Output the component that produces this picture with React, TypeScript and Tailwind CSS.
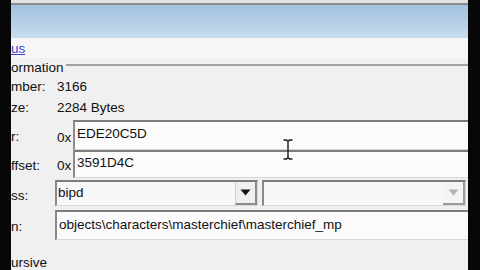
import React from 'react';

// sunken classic edit box
function EditBox({ value, className = '' }: { value: string; className?: string }) {
  return (
    <div
      className={`flex items-center border-t-2 border-l-2 border-b border-r border-t-[#7c7c7c] border-l-[#8a8a8a] border-b-[#d8d8d8] border-r-[#d8d8d8] bg-[#fbfbfb] pl-[2px] ${className}`}
    >
      <span className="whitespace-nowrap">{value}</span>
    </div>
  );
}

function Combo({ value, disabled = false, className = '' }: { value: string; disabled?: boolean; className?: string }) {
  return (
    <div
      className={`flex items-stretch border-t-2 border-l-2 border-b border-r border-t-[#7c7c7c] border-l-[#8a8a8a] border-b-[#d8d8d8] border-r-[#d8d8d8] bg-[#f8f8f8] ${className}`}
    >
      <div className="flex-1 flex items-center pl-[1px] whitespace-nowrap">{value}</div>
      <div
        className={`w-[22px] flex items-center justify-center border-r-2 border-b-2 ${
          disabled ? 'border-r-[#9a9a9a] border-b-[#9a9a9a] bg-[#f4f4f4]' : 'border-r-[#8a8a8a] border-b-[#8a8a8a] bg-[#f0f0f0] border-l border-l-[#d0d0d0]'
        }`}
      >
        <svg width="11" height="7" viewBox="0 0 11 7">
          <path d="M0.5 0.5 L10.5 0.5 L5.5 6.5 Z" fill={disabled ? '#b4b4b4' : '#111'} />
        </svg>
      </div>
    </div>
  );
}

export default function App() {
  return (
    <div className="w-[480px] h-[270px] flex bg-black overflow-hidden text-[13.5px] text-[#111] font-['Liberation_Sans',Arial,sans-serif]">
      <div className="w-[11px] bg-[#060606]" />
      <div className="relative flex-1 flex flex-col overflow-hidden bg-[#f0f0f0]">
        <div className="h-[3px] bg-[#e2e2e2]" />
        <div className="h-[2px] bg-[#8a8a8a]" />
        <div className="h-[33px] bg-gradient-to-b from-[#a3c1df] to-[#c8dcee]" />
        <div className="h-[20px] bg-[#f6f6f8] flex items-center">
          <span className="text-[#3a44c8] underline leading-none pt-[1px]">us</span>
        </div>

        {/* group header */}
        <div className="h-[18px] flex items-start">
          <span className="w-[55px] leading-[20px] whitespace-nowrap">ormation</span>
          <div className="flex-1 mt-[6px] border-t-2 border-[#a2a2a2]" />
        </div>

        <div className="h-[22px] flex items-center">
          <span className="w-[46px]">mber:</span>
          <span>3166</span>
        </div>
        <div className="h-[20px] flex items-center">
          <span className="w-[46px]">ze:</span>
          <span>2284 Bytes</span>
        </div>

        <div className="mt-[2px] h-[30px] flex">
          <span className="w-[46px] self-center pt-[4px]">r:</span>
          <span className="w-[16px] self-end pb-[2px]">0x</span>
          <EditBox value="EDE20C5D" className="flex-1 -mr-[10px] items-start pt-[2px]" />
        </div>
        <div className="h-[28px] flex">
          <span className="w-[46px] self-center pt-[4px]">ffset:</span>
          <span className="w-[16px] self-end pb-[2px]">0x</span>
          <EditBox value="3591D4C" className="flex-1 -mr-[10px] items-start pt-[1px]" />
        </div>

        <div className="mt-[2px] h-[26px] flex">
          <span className="w-[44px] self-center pt-[6px]">ss:</span>
          <Combo value="bipd" className="w-[203px]" />
          <Combo value="" disabled className="ml-[4px] w-[204px]" />
        </div>

        <div className="mt-[4px] h-[30px] flex">
          <span className="w-[44px] self-center pt-[4px]">n:</span>
          <EditBox value="objects\characters\masterchief\masterchief_mp" className="flex-1 -mr-[10px] pb-[1px]" />
        </div>

        <div className="flex-1 flex items-end pb-[1px]">
          <span className="leading-none">ursive</span>
        </div>

        {/* I-beam mouse cursor */}
        <svg className="absolute left-[271px] top-[139px]" width="12" height="21" viewBox="0 0 12 21">
          <path d="M1.5 1 H4.5 L6 2.5 L7.5 1 H10.5 M6 2.5 V18.5 M1.5 20 H4.5 L6 18.5 L7.5 20 H10.5" stroke="#1a1a1a" strokeWidth="1.4" fill="none" />
        </svg>
      </div>
      <div className="w-[12px] bg-[#070707]" />
    </div>
  );
}
